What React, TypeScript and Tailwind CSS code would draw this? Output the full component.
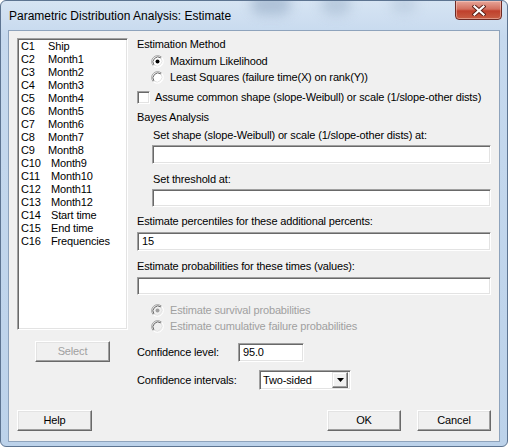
import React from "react";

const cols: [string, string][] = [
  ["C1", "Ship"],
  ["C2", "Month1"],
  ["C3", "Month2"],
  ["C4", "Month3"],
  ["C5", "Month4"],
  ["C6", "Month5"],
  ["C7", "Month6"],
  ["C8", "Month7"],
  ["C9", "Month8"],
  ["C10", "Month9"],
  ["C11", "Month10"],
  ["C12", "Month11"],
  ["C13", "Month12"],
  ["C14", "Start time"],
  ["C15", "End time"],
  ["C16", "Frequencies"],
];

function Radio({ checked, disabled }: { checked?: boolean; disabled?: boolean }) {
  return (
    <svg width="13" height="13" viewBox="0 0 13 13" className="shrink-0">
      <circle cx="6.5" cy="6.5" r="5.5" fill={disabled ? "#f0f0f0" : "#ffffff"} />
      <path d="M2.26 10.74 A6 6 0 0 1 10.74 2.26" fill="none" stroke="#a0a0a0" strokeWidth="1" />
      <path d="M10.74 2.26 A6 6 0 0 1 2.26 10.74" fill="none" stroke="#ffffff" strokeWidth="1" />
      <path d="M3 10 A5 5 0 0 1 10 3" fill="none" stroke="#696969" strokeWidth="1" />
      <path d="M10 3 A5 5 0 0 1 3 10" fill="none" stroke="#e3e3e3" strokeWidth="1" />
      {checked && <circle cx="6.5" cy="6.5" r="2" fill={disabled ? "#a0a0a0" : "#000000"} />}
    </svg>
  );
}

function Field({ className, value }: { className: string; value?: string }) {
  return (
    <div
      className={
        "h-[19px] bg-white border border-t-[#a0a0a0] border-l-[#a0a0a0] border-b-white border-r-white shadow-[inset_1px_1px_0_#696969,inset_-1px_-1px_0_#e3e3e3] pl-[4px] flex items-center text-black " +
        className
      }
    >
      {value}
    </div>
  );
}

function Button({ label, className, disabled }: { label: string; className: string; disabled?: boolean }) {
  return (
    <div
      className={
        "h-[21px] flex items-center justify-center bg-[#f0f0f0] border border-t-white border-l-white border-b-[#696969] border-r-[#696969] shadow-[inset_-1px_-1px_0_#a0a0a0,inset_1px_1px_0_#e3e3e3] " +
        (disabled ? "text-[#a0a0a0] " : "text-black ") +
        className
      }
    >
      {label}
    </div>
  );
}

export default function App() {
  return (
    <div className="w-[508px] h-[447px] bg-white">
      <div className="relative w-[508px] h-[447px] flex flex-col px-[7px] pb-[4px] rounded-[6px] border border-[#5d7491] bg-[linear-gradient(180deg,#d6e4f3_0%,#c6d9ee_8%,#bcd2ea_100%)] overflow-hidden [font-family:'Liberation_Sans',Arial,sans-serif] text-[11px] tracking-[-0.15px] whitespace-nowrap text-black">
        {/* glass blobs */}
        <div className="absolute left-[250px] top-[-8px] w-[40px] h-[22px] rounded-full bg-[#9fb4cc] blur-[6px] opacity-70" />
        <div className="absolute left-[320px] top-[-8px] w-[30px] h-[22px] rounded-full bg-[#a6bad0] blur-[6px] opacity-60" />
        <div className="absolute left-[390px] top-[-6px] w-[26px] h-[18px] rounded-full bg-[#aec1d6] blur-[6px] opacity-50" />

        {/* title bar */}
        <div className="relative h-[29px] flex items-start justify-between">
          <div className="pt-[7px] pl-[1px] text-[12px] leading-[16px] tracking-normal text-black">
            Parametric Distribution Analysis: Estimate
          </div>
          <div className="mr-[-2px] mt-[-1px] w-[47px] h-[20px] rounded-b-[4px] border border-[#6e2a24] bg-[linear-gradient(180deg,#e7a599_0%,#d3705f_45%,#c0402c_55%,#c85e44_100%)] shadow-[inset_0_0_0_1px_rgba(255,220,210,0.45)] flex items-center justify-center">
            <svg width="14" height="11" viewBox="0 0 14 11">
              <path d="M2.5 1.5 L11.5 9.5 M11.5 1.5 L2.5 9.5" stroke="#5a2018" strokeWidth="4" strokeLinecap="square" />
              <path d="M2.5 1.5 L11.5 9.5 M11.5 1.5 L2.5 9.5" stroke="#ffffff" strokeWidth="2.2" strokeLinecap="square" />
            </svg>
          </div>
        </div>

        {/* client area */}
        <div className="relative flex-1 flex flex-col bg-[#f0f0f0] border border-[#8ea3bc] pt-[7px] pl-[8px] pr-[8px]">
          <div className="flex gap-[9px] h-[352px]">
            {/* left column */}
            <div className="w-[112px] flex flex-col">
              <div className="h-[292px] bg-white border border-t-[#a0a0a0] border-l-[#a0a0a0] border-b-white border-r-white shadow-[inset_1px_1px_0_#696969,inset_-1px_-1px_0_#e3e3e3] pt-[1px] pl-[3px]">
                {cols.map(([c, n]) => (
                  <div key={c} className="h-[13px] leading-[13px] flex">
                    <span className={c.length > 2 ? "w-[30px]" : "w-[27px]"}>{c}</span>
                    <span>{n}</span>
                  </div>
                ))}
              </div>
              <div className="mt-[11px] flex justify-center">
                <Button label="Select" className="w-[75px]" disabled />
              </div>
            </div>

            {/* right column */}
            <div className="w-[355px] flex flex-col">
              <div className="h-[13px] leading-[13px]">Estimation Method</div>
              <div className="mt-[2px] h-[16px] flex items-center pl-[14px] gap-[6px]">
                <Radio checked />
                <span>Maximum Likelihood</span>
              </div>
              <div className="h-[16px] flex items-center pl-[14px] gap-[6px]">
                <Radio />
                <span>Least Squares (failure time(X) on rank(Y))</span>
              </div>
              <div className="mt-[5px] h-[14px] flex items-center gap-[5px]">
                <div className="w-[13px] h-[13px] shrink-0 bg-white border border-t-[#a0a0a0] border-l-[#a0a0a0] border-b-white border-r-white shadow-[inset_1px_1px_0_#696969,inset_-1px_-1px_0_#e3e3e3]" />
                <span>Assume common shape (slope-Weibull) or scale (1/slope-other dists)</span>
              </div>
              <div className="mt-[7px] h-[13px] leading-[13px]">Bayes Analysis</div>
              <div className="mt-[5px] h-[13px] leading-[13px] pl-[16px]">
                Set shape (slope-Weibull) or scale (1/slope-other dists) at:
              </div>
              <Field className="mt-[3px] ml-[15px] w-[339px]" />
              <div className="mt-[9px] h-[13px] leading-[13px] pl-[16px]">Set threshold at:</div>
              <Field className="mt-[3px] ml-[15px] w-[339px]" />
              <div className="mt-[8px] h-[13px] leading-[13px]">
                Estimate percentiles for these additional percents:
              </div>
              <Field className="mt-[4px] w-[354px]" value="15" />
              <div className="mt-[9px] h-[13px] leading-[13px]">
                Estimate probabilities for these times (values):
              </div>
              <Field className="mt-[4px] w-[354px]" />
              <div className="mt-[7px] h-[16px] flex items-center pl-[14px] gap-[6px] text-[#a0a0a0]">
                <Radio checked disabled />
                <span>Estimate survival probabilities</span>
              </div>
              <div className="h-[16px] flex items-center pl-[14px] gap-[6px] text-[#a0a0a0]">
                <Radio disabled />
                <span>Estimate cumulative failure probabilities</span>
              </div>
              <div className="mt-[9px] h-[19px] flex items-center">
                <span className="w-[101px]">Confidence level:</span>
                <Field className="w-[66px]" value="95.0" />
              </div>
              <div className="mt-[8px] h-[20px] flex items-center">
                <span className="w-[122px]">Confidence intervals:</span>
                <div className="w-[92px] h-[20px] bg-white border border-t-[#a0a0a0] border-l-[#a0a0a0] border-b-white border-r-white shadow-[inset_1px_1px_0_#696969,inset_-1px_-1px_0_#e3e3e3] flex items-center pl-[3px] pr-[2px]">
                  <span className="flex-1">Two-sided</span>
                  <div className="w-[16px] h-[16px] bg-[#f0f0f0] border border-t-[#e3e3e3] border-l-[#e3e3e3] border-b-[#696969] border-r-[#696969] shadow-[inset_-1px_-1px_0_#a0a0a0,inset_1px_1px_0_#ffffff] flex items-center justify-center">
                    <svg width="7" height="4" viewBox="0 0 7 4">
                      <path d="M0 0 H7 L3.5 4 Z" fill="#000000" />
                    </svg>
                  </div>
                </div>
              </div>
            </div>
          </div>

          <div className="mt-[20px] flex items-center">
            <Button label="Help" className="w-[75px]" />
            <div className="flex-1" />
            <Button label="OK" className="w-[74px]" />
            <Button label="Cancel" className="w-[74px] ml-[16px]" />
          </div>
        </div>
      </div>
    </div>
  );
}
